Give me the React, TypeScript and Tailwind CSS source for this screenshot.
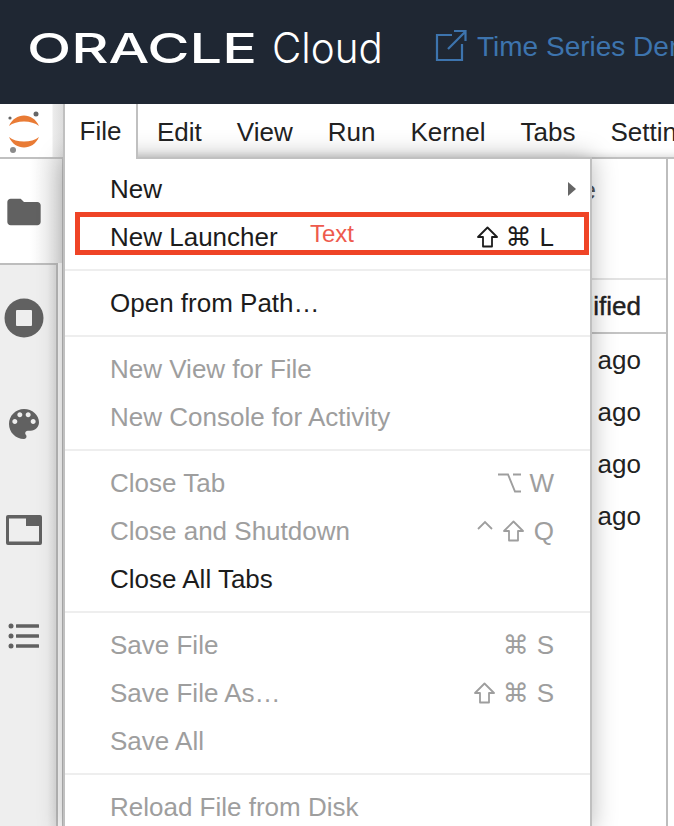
type Key = "shift" | "caret" | "option" | string;

const menuGroups: { label: string; shortcut?: Key[]; enabled?: boolean; arrow?: boolean }[][] = [
  [
    { label: "New", enabled: true, arrow: true },
    { label: "New Launcher", enabled: true, shortcut: ["shift", "⌘", "L"] },
  ],
  [{ label: "Open from Path…", enabled: true }],
  [{ label: "New View for File" }, { label: "New Console for Activity" }],
  [
    { label: "Close Tab", shortcut: ["option", "W"] },
    { label: "Close and Shutdown", shortcut: ["caret", "shift", "Q"] },
    { label: "Close All Tabs", enabled: true },
  ],
  [
    { label: "Save File", shortcut: ["⌘", "S"] },
    { label: "Save File As…", shortcut: ["shift", "⌘", "S"] },
    { label: "Save All" },
  ],
  [{ label: "Reload File from Disk" }],
];

function ShortcutKey({ k }: { k: Key }) {
  if (k === "shift") {
    return (
      <svg width="21" height="22" viewBox="0 0 21 22" fill="none" stroke="currentColor" strokeWidth="1.8" strokeLinejoin="round">
        <path d="M10.5 1.5L20 11h-5v9.5H6V11H1z" />
      </svg>
    );
  }
  if (k === "caret") {
    return (
      <svg width="16" height="20" viewBox="0 0 16 20" fill="none" stroke="currentColor" strokeWidth="1.8" className="mb-[6px]">
        <path d="M1 11l7-7 7 7" />
      </svg>
    );
  }
  if (k === "option") {
    return (
      <svg width="23" height="20" viewBox="0 0 23 20" fill="none" stroke="currentColor" strokeWidth="1.9">
        <path d="M0 1.5h10l7 17h6M15 1.5h8" />
      </svg>
    );
  }
  return <span>{k}</span>;
}

function SideIcon({ children }: { children: React.ReactNode }) {
  return <div className="flex h-[106px] w-[48px] shrink-0 items-center justify-center">{children}</div>;
}

function JupyterLogo() {
  return (
    <svg width="40" height="52" viewBox="0 0 40 52">
      <path d="M3 22 C9 8 27 8 33 22 C26 16 10 16 3 22 Z" fill="#e97b35" />
      <path d="M3 33 C9 47 27 47 33 33 C26 39 10 39 3 33 Z" fill="#e97b35" />
      <circle cx="30" cy="10" r="2.5" fill="#666" />
      <circle cx="4" cy="14" r="1.6" fill="#666" />
      <circle cx="7" cy="46" r="3" fill="#8a8a8a" />
    </svg>
  );
}

export default function App() {
  return (
    <div className="relative h-[826px] w-[674px] overflow-hidden bg-white font-['Liberation_Sans','DejaVu_Sans',sans-serif] text-[#222]">
      <header className="flex h-[104px] items-center bg-[#1f2733] pb-[8px] pl-[27px]">
        <svg width="231" height="40" viewBox="0 0 231 40" className="shrink-0">
          <text
            x="0"
            y="35"
            textLength="230"
            lengthAdjust="spacingAndGlyphs"
            fill="#ffffff"
            fontFamily="Inter, sans-serif"
            fontWeight="500"
            fontSize="41"
          >
            ORACLE
          </text>
        </svg>
        <span className="ml-[14px] inline-block origin-left scale-x-[0.96] font-['Inter',sans-serif] text-[42px] leading-none font-light text-white">
          Cloud
        </span>
        <svg width="32" height="32" viewBox="0 0 32 32" className="absolute top-[29px] left-[435px]" fill="none" stroke="#3d74ae" strokeWidth="2.2">
          <path d="M17 6H2v25h25V15" />
          <path d="M13 20L30 3M19 2h11.5v10" />
        </svg>
        <span className="absolute top-[29px] left-[477px] text-[28px] leading-[36px] whitespace-nowrap text-[#3d74ae]">
          Time Series Demo
        </span>
      </header>

      <div className="flex h-[55px] border-b-2 border-[#c0c0c0]">
        <div className="flex h-[53px] w-[63px] shrink-0 bg-[linear-gradient(to_right,#fff_0,#fff_52px,#ececec_53px,#ddd_63px)] pl-[6px]">
          <JupyterLogo />
        </div>
        <nav className="flex flex-1 items-center pt-[4px] pl-[94px] text-[26px] whitespace-nowrap shadow-[inset_0_-10px_10px_-10px_rgba(0,0,0,0.2)]">
          {["Edit", "View", "Run", "Kernel", "Tabs", "Settings"].map((m) => (
            <span key={m} className="mr-[35px]">
              {m}
            </span>
          ))}
        </nav>
      </div>

      <div className="flex h-[667px]">
        <aside className="flex h-full w-[64px] shrink-0 flex-col border-r-2 border-[#bdbdbd]">
          <div className="h-[104px] shrink-0 bg-[linear-gradient(to_right,#fff_30px,#e6e6e6)]">
            <SideIcon>
              <svg width="40" height="40" viewBox="0 0 24 24" fill="#616161">
                <path d="M10 4H4c-1.1 0-2 .9-2 2v12c0 1.1.9 2 2 2h16c1.1 0 2-.9 2-2V8c0-1.1-.9-2-2-2h-8l-2-2z" />
              </svg>
            </SideIcon>
          </div>
          <div className="mr-[4px] flex-1 border-t-2 border-r-2 border-[#bdbdbd] bg-[linear-gradient(to_right,#eeeeee_85%,#e2e2e2)]">
            <SideIcon>
              <svg width="40" height="40" viewBox="0 0 40 40">
                <circle cx="20" cy="20" r="19.5" fill="#616161" />
                <rect x="12" y="12" width="16" height="16" rx="1" fill="#eeeeee" />
              </svg>
            </SideIcon>
            <SideIcon>
              <svg width="40" height="40" viewBox="0 0 24 24" fill="#616161">
                <path d="M12 3c-4.97 0-9 4.03-9 9s4.03 9 9 9c.83 0 1.5-.67 1.5-1.5 0-.39-.15-.74-.39-1.01-.23-.26-.38-.61-.38-.99 0-.83.67-1.5 1.5-1.5H16c2.76 0 5-2.24 5-5 0-4.42-4.03-8-9-8zm-5.5 9c-.83 0-1.5-.67-1.5-1.5S5.67 9 6.5 9 8 9.67 8 10.5 7.33 12 6.5 12zm3-4C8.67 8 8 7.33 8 6.5S8.67 5 9.5 5s1.5.67 1.5 1.5S10.33 8 9.5 8zm5 0c-.83 0-1.5-.67-1.5-1.5S13.67 5 14.5 5s1.5.67 1.5 1.5S15.33 8 14.5 8zm3 4c-.83 0-1.5-.67-1.5-1.5S16.67 9 17.5 9s1.5.67 1.5 1.5-.67 1.5-1.5 1.5z" />
              </svg>
            </SideIcon>
            <SideIcon>
              <svg width="38" height="32" viewBox="0 0 38 32" fill="#616161">
                <path fillRule="evenodd" d="M3 1h32a2 2 0 0 1 2 2v26a2 2 0 0 1-2 2H3a2 2 0 0 1-2-2V3a2 2 0 0 1 2-2zm1 3.5v23h30V12H21V4.5H4z" />
              </svg>
            </SideIcon>
            <SideIcon>
              <svg width="32" height="26" viewBox="0 0 32 26" fill="#616161">
                <circle cx="3" cy="3" r="2.5" />
                <circle cx="3" cy="13" r="2.5" />
                <circle cx="3" cy="23" r="2.5" />
                <rect x="8" y="1.2" width="23" height="3.5" rx="0.5" />
                <rect x="8" y="11.2" width="23" height="3.5" rx="0.5" />
                <rect x="8" y="21.2" width="23" height="3.5" rx="0.5" />
              </svg>
            </SideIcon>
          </div>
        </aside>

        <main className="flex w-[604px] shrink-0 flex-col border-r-2 border-[#bdbdbd] text-[26px]">
          <div className="h-[121px] shrink-0 border-b-2 border-[#e3e3e3] pt-[13px] pr-[70px] text-right leading-[36px] text-[#555]">e</div>
          <div className="flex h-[54px] shrink-0 items-center justify-end border-b-2 border-[#c4c4c4] pr-[25px] [-webkit-text-stroke:0.4px_#222]">
            Last Modified
          </div>
          <div className="flex flex-col pr-[25px] text-right">
            {[0, 1, 2, 3].map((i) => (
              <div key={i} className="flex h-[52px] items-center justify-end">
                ago
              </div>
            ))}
          </div>
        </main>
      </div>

      {/* File tab */}
      <div className="absolute top-[104px] left-[63px] z-20 flex h-[55px] w-[75px] items-center justify-center border-x-2 border-[#c0c0c0] bg-white text-[26px]">
        File
      </div>

      {/* Open menu */}
      <div className="absolute top-[157px] left-[63px] z-10 w-[529px] border-x-2 border-t-2 border-[#c0c0c0] bg-white pt-[6px] text-[26px] shadow-[0_0_24px_rgba(0,0,0,0.28)]">
        {menuGroups.map((group, gi) => (
          <div key={gi} className={gi > 0 ? "mt-[8px] border-t-2 border-[#eeeeee] pt-[8px]" : ""}>
            {group.map((item) => (
              <div
                key={item.label}
                className={`flex h-[48px] items-center justify-between pr-[36px] pl-[45px] ${
                  item.enabled ? "text-[#1c1c1c]" : "text-[#9e9e9e]"
                }`}
              >
                <span className="whitespace-nowrap">{item.label}</span>
                {item.shortcut && (
                  <span className={`flex items-center ${item.shortcut.includes("caret") ? "gap-[10px]" : "gap-[8px]"}`}>
                    {item.shortcut.map((k) => (
                      <ShortcutKey key={k} k={k} />
                    ))}
                  </span>
                )}
                {item.arrow && <span className="mr-[-22px] h-0 w-0 border-y-[7px] border-l-[8px] border-y-transparent border-l-[#666]" />}
              </div>
            ))}
          </div>
        ))}
      </div>

      {/* Annotation over the screenshot */}
      <div className="absolute top-[212px] left-[75px] z-30 flex h-[43px] w-[514px] items-center border-[5px] border-[#ef4426] pl-[230px] text-[24px] text-[#ee5a4d]">
        Text
      </div>
    </div>
  );
}
